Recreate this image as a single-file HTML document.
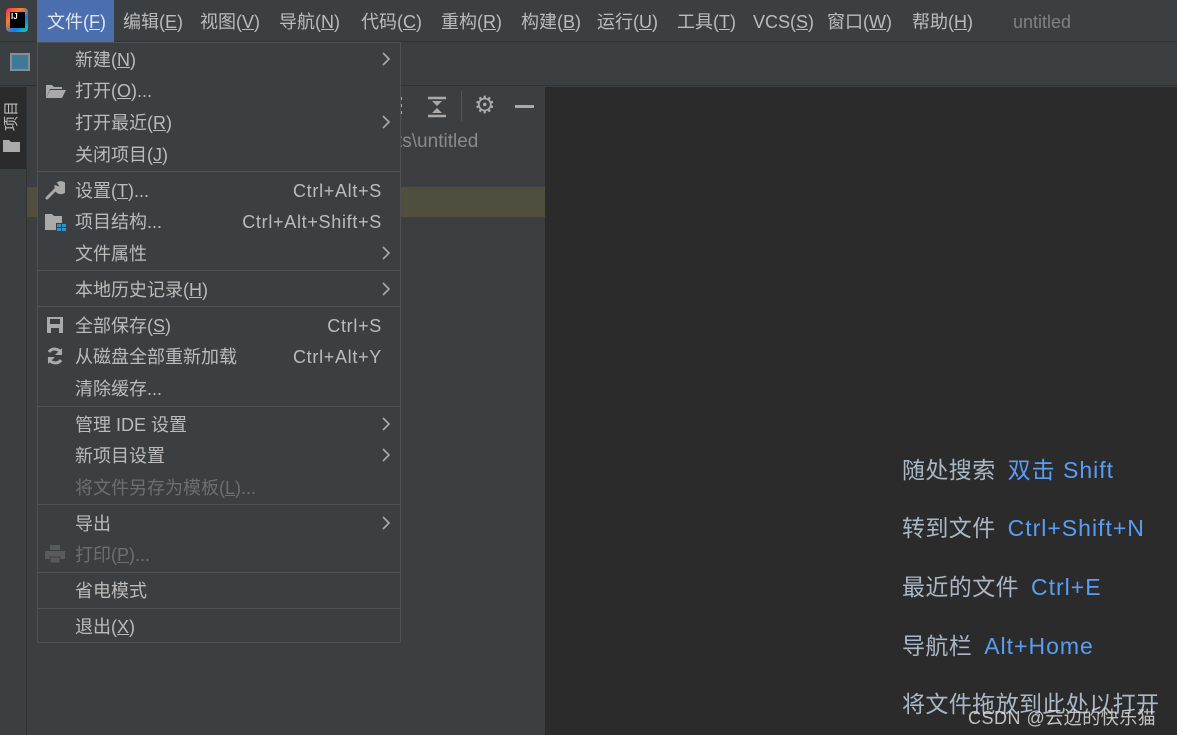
<!DOCTYPE html>
<html><head><meta charset="utf-8"><style>
*{margin:0;padding:0;box-sizing:border-box}
body{width:1177px;height:735px;overflow:hidden;background:#3c3f41;font-family:"Liberation Sans","Noto Sans CJK SC",sans-serif;color:#bbbbbb;position:relative}
.abs{position:absolute}
.mb{position:absolute;top:1px;height:42px;line-height:42px;font-size:18px;color:#bbbbbb;white-space:nowrap}
.mi{position:absolute;left:75px;font-size:18px;line-height:20px;color:#bbbbbb;white-space:nowrap}
.sc{position:absolute;right:795px;font-size:18px;line-height:20px;color:#bbbbbb;letter-spacing:0.7px;white-space:nowrap}
.ar{position:absolute;left:381px;width:10px;height:16px}
.sep{position:absolute;left:38px;width:362px;height:1px;background:#515151}
.hint{position:absolute;left:902px;font-size:23px;color:#a9b7c6;white-space:nowrap;letter-spacing:0.4px}
.hint b{font-weight:normal;color:#589df6;margin-left:12px;letter-spacing:1px}
u{text-decoration:underline}
</style></head><body>
<svg width="0" height="0" style="position:absolute"><defs><symbol id="chev" viewBox="0 0 10 16"><path d="M2 2L8 8L2 14" stroke="#aaa" stroke-width="1.6" fill="none"/></symbol></defs></svg>
<div class="abs" style="left:0;top:0;width:1177px;height:42px;background:#3c3f41;border-bottom:1px solid #323232"></div>
<div class="abs" style="left:6px;top:8px;width:22px;height:24px;background:linear-gradient(135deg,#fe2857,#fc801d,#087cfa,#21d789);border-radius:4px"></div>
<div class="abs" style="left:10px;top:12px;width:15px;height:16px;background:#000;color:#fff;font-size:8px;font-weight:bold;line-height:10px;padding-left:1px">IJ</div>
<div class="abs" style="left:37px;top:0;width:77px;height:42px;background:#4b6eaf"></div>
<div class="mb" style="left:47px;color:#dfe6f0">文件(<u>F</u>)</div>
<div class="mb" style="left:123px">编辑(<u>E</u>)</div>
<div class="mb" style="left:200px">视图(<u>V</u>)</div>
<div class="mb" style="left:279px">导航(<u>N</u>)</div>
<div class="mb" style="left:361px">代码(<u>C</u>)</div>
<div class="mb" style="left:441px">重构(<u>R</u>)</div>
<div class="mb" style="left:521px">构建(<u>B</u>)</div>
<div class="mb" style="left:597px">运行(<u>U</u>)</div>
<div class="mb" style="left:677px">工具(<u>T</u>)</div>
<div class="mb" style="left:753px">VCS(<u>S</u>)</div>
<div class="mb" style="left:827px">窗口(<u>W</u>)</div>
<div class="mb" style="left:912px">帮助(<u>H</u>)</div>
<div class="mb" style="left:1013px;color:#808080">untitled</div>
<div class="abs" style="left:0;top:43px;width:1177px;height:43px;background:#3c3f41;border-bottom:1px solid #323232"></div>
<div class="abs" style="left:10px;top:53px;width:20px;height:18px;border:2px solid #8a8d90;background:#3d7a9a"></div>
<div class="abs" style="left:0;top:87px;width:27px;height:648px;background:#3c3f41;border-right:1px solid #323232"></div>
<div class="abs" style="left:0;top:87px;width:26px;height:82px;background:#2b2b2b"></div>
<div class="abs" style="left:-4px;top:108px;font-size:15px;color:#bbb;transform:rotate(-90deg);width:32px;text-align:center;line-height:16px">项目</div>
<svg class="abs" style="left:3px;top:139px" width="18" height="14"><path d="M0 1H6L8 3H17V13H0Z" fill="#aaa"/></svg>
<div class="abs" style="left:27px;top:87px;width:518px;height:648px;background:#3c3f41"></div>
<div class="abs" style="left:27px;top:187px;width:518px;height:30px;background:#4f4e3f"></div>
<div class="abs" style="left:397px;top:131px;font-size:19px;color:#8a8a8a">ts\untitled</div>
<div class="abs" style="left:396px;top:97px;width:6px;height:3px;background:#aaa;box-shadow:0 7px 0 #aaa,0 14px 0 #aaa"></div>
<svg class="abs" style="left:426px;top:96px" width="22" height="22"><path d="M2 2H20M2 20H20" stroke="#aaa" stroke-width="2.5"/><path d="M6 5L16 5L11 10Z M6 17L16 17L11 12Z" fill="#aaa"/></svg>
<div class="abs" style="left:461px;top:91px;width:1px;height:30px;background:#555"></div>
<div class="abs" style="left:474px;top:93px;font-size:24px;color:#aaa;line-height:26px">⚙</div>
<div class="abs" style="left:515px;top:105px;width:19px;height:3px;background:#aaa"></div>
<div class="abs" style="left:545px;top:87px;width:632px;height:648px;background:#2b2b2b"></div>
<div class="hint" style="top:451px">随处搜索<b>双击 Shift</b></div>
<div class="hint" style="top:509px">转到文件<b>Ctrl+Shift+N</b></div>
<div class="hint" style="top:568px">最近的文件<b>Ctrl+E</b></div>
<div class="hint" style="top:627px">导航栏<b>Alt+Home</b></div>
<div class="hint" style="top:685px">将文件拖放到此处以打开</div>
<div class="abs" style="left:968px;top:704px;font-size:18px;color:#ddd;opacity:.85;letter-spacing:0.5px">CSDN @云边的快乐猫</div>
<div class="abs" style="left:37px;top:42px;width:364px;height:601px;background:#3c3f41;border:1px solid #515151"></div>
<div class="mi" style="top:50px">新建(<u>N</u>)</div><svg class="ar" style="top:51px"><use href="#chev"/></svg>
<svg class="abs" style="left:45px;top:83px" width="22" height="16"><path d="M1 2H7L9 4H17V6H5L1 15Z" fill="#aaa"/><path d="M5 7H21L17 15H1Z" fill="#aaa"/></svg>
<div class="mi" style="top:81px">打开(<u>O</u>)...</div>
<div class="mi" style="top:113px">打开最近(<u>R</u>)</div><svg class="ar" style="top:114px"><use href="#chev"/></svg>
<div class="mi" style="top:145px">关闭项目(<u>J</u>)</div>
<div class="sep" style="top:171px"></div>
<svg class="abs" style="left:45px;top:180px" width="20" height="20"><path d="M2 18L11 9M11 9A5 5 0 1 0 14 3L16 6L14 8L11 7Z" stroke="#aaa" stroke-width="3" fill="#aaa" stroke-linecap="round"/></svg>
<div class="mi" style="top:181px">设置(<u>T</u>)...</div><div class="sc" style="top:181px">Ctrl+Alt+S</div>
<svg class="abs" style="left:44px;top:212px" width="24" height="20"><path d="M1 2H8L10 4H18V11H12V18H1Z" fill="#aaa"/><rect x="13" y="12" width="4" height="3" fill="#3592c4"/><rect x="18" y="12" width="4" height="3" fill="#3592c4"/><rect x="13" y="16" width="4" height="3" fill="#3592c4"/><rect x="18" y="16" width="4" height="3" fill="#3592c4"/></svg>
<div class="mi" style="top:212px">项目结构...</div><div class="sc" style="top:212px">Ctrl+Alt+Shift+S</div>
<div class="mi" style="top:244px">文件属性</div><svg class="ar" style="top:245px"><use href="#chev"/></svg>
<div class="sep" style="top:270px"></div>
<div class="mi" style="top:280px">本地历史记录(<u>H</u>)</div><svg class="ar" style="top:281px"><use href="#chev"/></svg>
<div class="sep" style="top:306px"></div>
<svg class="abs" style="left:46px;top:316px" width="18" height="18"><path d="M1 1H17V17H1Z" fill="#aaa"/><rect x="4" y="3" width="10" height="5" fill="#3c3f41"/><rect x="5" y="12" width="8" height="5" fill="#3c3f41"/></svg>
<div class="mi" style="top:316px">全部保存(<u>S</u>)</div><div class="sc" style="top:316px">Ctrl+S</div>
<svg class="abs" style="left:45px;top:346px" width="20" height="20"><path d="M16 7A7 7 0 0 0 4 6M4 13A7 7 0 0 0 16 14" stroke="#aaa" stroke-width="3" fill="none"/><path d="M17 2V9H10Z M3 18V11H10Z" fill="#aaa"/></svg>
<div class="mi" style="top:347px">从磁盘全部重新加载</div><div class="sc" style="top:347px">Ctrl+Alt+Y</div>
<div class="mi" style="top:379px">清除缓存...</div>
<div class="sep" style="top:406px"></div>
<div class="mi" style="top:415px">管理 IDE 设置</div><svg class="ar" style="top:416px"><use href="#chev"/></svg>
<div class="mi" style="top:446px">新项目设置</div><svg class="ar" style="top:447px"><use href="#chev"/></svg>
<div class="mi" style="top:478px;color:#6e6e6e">将文件另存为模板(<u>L</u>)...</div>
<div class="sep" style="top:504px"></div>
<div class="mi" style="top:514px">导出</div><svg class="ar" style="top:515px"><use href="#chev"/></svg>
<svg class="abs" style="left:44px;top:544px" width="22" height="20"><rect x="6" y="1" width="10" height="5" fill="#5a5a5a"/><rect x="1" y="7" width="20" height="8" fill="#5a5a5a"/><rect x="6" y="13" width="10" height="6" fill="#5a5a5a" stroke="#3c3f41"/></svg>
<div class="mi" style="top:545px;color:#6e6e6e">打印(<u>P</u>)...</div>
<div class="sep" style="top:572px"></div>
<div class="mi" style="top:581px">省电模式</div>
<div class="sep" style="top:608px"></div>
<div class="mi" style="top:617px">退出(<u>X</u>)</div>
</body></html>
